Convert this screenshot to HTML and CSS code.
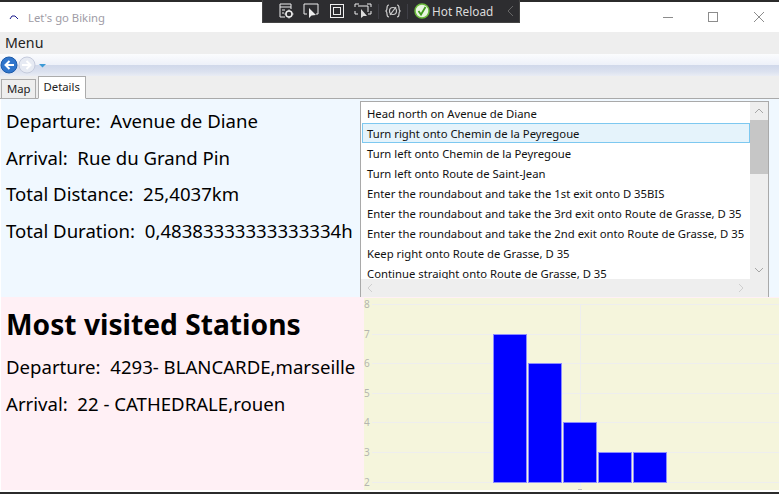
FILE: index.html
```html
<!DOCTYPE html>
<html lang="en">

<head>
    <meta charset="UTF-8">
    <title>Let's go Biking</title>
    <link rel="stylesheet" href="styles.css">
</head>

<body>
    <div class="window">
        <!--title bar-->
        <div class="titlebar">
            <svg class="app-icon" width="10" height="6" viewBox="0 0 10 6"><path d="M1 5 L3 2 H6 L9 5" fill="none" stroke="#1a1a8c" stroke-width="1"/></svg>
            <span class="app-title">Let's go Biking</span>
            <div class="win-btns">
                <svg width="12" height="12" viewBox="0 0 12 12"><path d="M1 6.5 H11" stroke="#8c8c8c"/></svg>
                <svg width="12" height="12" viewBox="0 0 12 12"><rect x="0.5" y="1.5" width="9" height="9" fill="none" stroke="#8c8c8c"/></svg>
                <svg width="12" height="12" viewBox="0 0 12 12"><path d="M0 1 L10 11 M10 1 L0 11" stroke="#8c8c8c"/></svg>
            </div>
        </div>

        <div class="menu">Menu</div>

        <!--back and forward-->
        <div class="navbar">
            <svg width="47" height="20" viewBox="0 0 47 20">
                <circle cx="9" cy="10" r="8" fill="#2f75cc" stroke="#1c5aa8"/>
                <path d="M14 10 H6 M9.500 6 L5.500 10 L9.500 14" fill="none" stroke="#fff" stroke-width="2"/>
                <circle cx="27" cy="10" r="8" fill="#e6eaf3" stroke="#c5cbdc"/>
                <path d="M22 10 H30 M26.500 6 L30.500 10 L26.500 14" fill="none" stroke="#fff" stroke-width="2"/>
                <path d="M39 9 H46 L42.500 12.500 Z" fill="#3c9ad6"/>
            </svg>
        </div>

        <div class="tabs">
            <div class="tab tab-map">Map</div>
            <div class="tab tab-active">Details</div>
        </div>

        <div class="content">
            <!--trip summary-->
            <div class="panel-trip">
                <p class="line">Departure:&nbsp; Avenue de Diane</p>
                <p class="line">Arrival:&nbsp; Rue du Grand Pin</p>
                <p class="line">Total Distance:&nbsp; 25,4037km</p>
                <p class="line">Total Duration:&nbsp; 0,48383333333333334h</p>
            </div>

            <!--instructions-->
            <div class="panel-steps">
                <div class="listbox">
                    <div class="list-main">
                        <ul class="steps">
                            <li>Head north on Avenue de Diane</li>
                            <li class="selected">Turn right onto Chemin de la Peyregoue</li>
                            <li>Turn left onto Chemin de la Peyregoue</li>
                            <li>Turn left onto Route de Saint-Jean</li>
                            <li>Enter the roundabout and take the 1st exit onto D 35BIS</li>
                            <li>Enter the roundabout and take the 3rd exit onto Route de Grasse, D 35</li>
                            <li>Enter the roundabout and take the 2nd exit onto Route de Grasse, D 35</li>
                            <li>Keep right onto Route de Grasse, D 35</li>
                            <li>Continue straight onto Route de Grasse, D 35</li>
                        </ul>
                        <div class="vscroll">
                            <svg width="18" height="18" viewBox="0 0 18 18"><path d="M5 11 L9 7 L13 11" fill="none" stroke="#a6a6a6"/></svg>
                            <div class="thumb"></div>
                            <svg class="arrow-down" width="18" height="18" viewBox="0 0 18 18"><path d="M5 7 L9 11 L13 7" fill="none" stroke="#a6a6a6"/></svg>
                        </div>
                    </div>
                    <div class="hscroll">
                        <svg width="18" height="18" viewBox="0 0 18 18"><path d="M11 5 L7 9 L11 13" fill="none" stroke="#cfcfcf"/></svg>
                        <svg width="18" height="18" viewBox="0 0 18 18"><path d="M7 5 L11 9 L7 13" fill="none" stroke="#cfcfcf"/></svg>
                    </div>
                </div>
            </div>

            <!--stations-->
            <div class="panel-stations">
                <h1 class="heading">Most visited Stations</h1>
                <p class="line">Departure:&nbsp; 4293- BLANCARDE,marseille</p>
                <p class="line">Arrival:&nbsp; 22 - CATHEDRALE,rouen</p>
            </div>

            <!--chart-->
            <div class="panel-chart">
                <svg class="chart" width="415" height="192" viewBox="0 0 415 192">
                    <g stroke="#eeeeee" stroke-width="1">
                        <path d="M8 6.500 H415"/>
                        <path d="M8 36.500 H415"/>
                        <path d="M8 65.500 H415"/>
                        <path d="M8 95.500 H415"/>
                        <path d="M8 124.500 H415"/>
                        <path d="M8 154.500 H415"/>
                        <path d="M8 184.500 H415"/>
                        <path d="M216.500 6 V190"/>
                    </g>
                    <path d="M214 191.500 H218" stroke="#bdbdbd"/>
                    <g class="axis">
                        <text x="0" y="10">8</text>
                        <text x="0" y="40">7</text>
                        <text x="0" y="69">6</text>
                        <text x="0" y="99">5</text>
                        <text x="0" y="128">4</text>
                        <text x="0" y="158">3</text>
                        <text x="0" y="188">2</text>
                    </g>
                    <g fill="#0000ff" stroke="#8c8cff" stroke-width="1">
                        <rect x="129.500" y="36.500" width="33" height="148"/>
                        <rect x="164.500" y="65.500" width="33" height="119"/>
                        <rect x="199.500" y="124.500" width="33" height="60"/>
                        <rect x="234.500" y="154.500" width="33" height="30"/>
                        <rect x="269.500" y="154.500" width="33" height="30"/>
                    </g>
                </svg>
            </div>
        </div>
    </div>

    <!--debug toolbar on top of the window-->
    <div class="devbar">
        <svg width="16" height="16" viewBox="0 0 16 16"><path d="M7 14 H2 V1 H13 V6 M2 4 H13 M4 7 H7 M4 10 H6" fill="none" stroke="#eee"/><circle cx="11" cy="11" r="3" fill="none" stroke="#eee" stroke-width="1.500"/><path d="M11 6.500 V8 M11 14 V15.500 M6.500 11 H8 M14 11 H15.500" stroke="#eee"/></svg>
        <svg width="16" height="16" viewBox="0 0 16 16"><path d="M4 11 H1 V1 H15 V11 H13" fill="none" stroke="#eee"/><path d="M6 5 L6 15 L8.500 12.500 L13 12 Z" fill="#eee"/></svg>
        <svg class="gap-r" width="16" height="16" viewBox="0 0 16 16"><rect x="1.500" y="1.500" width="13" height="13" fill="none" stroke="#eee"/><rect x="4.500" y="4.500" width="7" height="7" fill="none" stroke="#eee"/></svg>
        <svg width="18" height="16" viewBox="0 0 18 16"><path d="M1 4 V1 H5 M13 1 H17 V4 M1 8 V11 H4 M14 11 H17 V8 M4 3 H14 V9" fill="none" stroke="#eee"/><path d="M7 6 L7 15 L9.500 13 L13 13 Z" fill="#ddd"/></svg>
        <span class="dev-sep"></span>
        <svg width="16" height="16" viewBox="0 0 16 16"><path d="M4 2 Q2 2 2 5 Q2 7 1 8 Q2 9 2 11 Q2 14 4 14 M12 2 Q14 2 14 5 Q14 7 15 8 Q14 9 14 11 Q14 14 12 14" fill="none" stroke="#ccc" stroke-width="1.200"/><circle cx="8" cy="8" r="3.500" fill="none" stroke="#ccc" stroke-width="1.200"/><path d="M5 12 L11 4" stroke="#ccc" stroke-width="1.200"/></svg>
        <span class="dev-sep"></span>
        <svg width="16" height="16" viewBox="0 0 16 16"><circle cx="8" cy="8" r="7" fill="#e8f5e0" stroke="#6cbb3c" stroke-width="1.500"/><path d="M4.500 8 L7 11.500 L11.500 4" fill="none" stroke="#3f9a1c" stroke-width="1.800"/></svg>
        <span class="dev-label">Hot Reload</span>
        <svg class="dev-chevron" width="8" height="12" viewBox="0 0 8 12"><path d="M7 1 L2 6 L7 11" fill="none" stroke="#666"/></svg>
    </div>
</body>

</html>
```

FILE: styles.css
```css
* {
    margin: 0;
    padding: 0;
    box-sizing: border-box;
}

html,
body {
    width: 779px;
    height: 494px;
    overflow: hidden;
}

body {
    background-color: #2b2b2b;
    font-family: "Noto Sans", "Open Sans", sans-serif;
    color: #000;
    position: relative;
}

.window {
    margin-top: 2px;
    height: 490px;
    background-color: #fff;
    display: flex;
    flex-direction: column;
}

/*title bar*/
.titlebar {
    height: 30px;
    display: flex;
    align-items: center;
    padding-left: 9px;
    flex-shrink: 0;
}

.app-icon {
    margin-right: 9px;
}

.app-title {
    font-size: 11.3px;
    color: #a09ca6;
}

.win-btns {
    margin-left: auto;
    display: flex;
    gap: 34px;
    padding-right: 13px;
}

.menu {
    height: 22px;
    background-color: #eeeeee;
    font-size: 14.2px;
    line-height: 22px;
    padding-left: 5px;
    color: #222;
    flex-shrink: 0;
}

.navbar {
    height: 22px;
    display: flex;
    align-items: center;
    background: linear-gradient(to bottom, #fbfcfe 0, #eef1f9 48%, #d0d8ea 50%, #dbe1ef 80%, #e9ecf4 100%);
    flex-shrink: 0;
}

/*tabs*/
.tabs {
    height: 23px;
    background-color: #eeeeee;
    border-bottom: 1px solid #a9a9a9;
    display: flex;
    align-items: flex-end;
    padding-left: 1px;
    flex-shrink: 0;
}

.tab {
    height: 20px;
    margin-bottom: -1px;
    padding: 0 5px;
    font-size: 11.3px;
    line-height: 18px;
    color: #222;
    background-color: #eeeeee;
    border: 1px solid #acacac;
}

.tab-map {
    padding-right: 4px;
}

.tab-active {
    height: 23px;
    line-height: 20px;
    padding: 0 5px;
    margin-left: 2px;
    background-color: #fff;
    border-bottom-color: #fff;
}

/*content*/
.content {
    flex: 1;
    margin-left: 1px;
    display: grid;
    grid-template-columns: 359px 419px;
    grid-template-rows: 198px 193px;
}

.panel-trip {
    background-color: #f0f8ff;
    padding-top: 10px;
    padding-left: 5px;
}

.line {
    font-size: 18.6px;
    line-height: 24px;
    margin-bottom: 12.500px;
    white-space: nowrap;
}

.panel-steps {
    background-color: #f0f8ff;
    padding: 2px 10px 0 0;
}

.listbox {
    height: 196px;
    border: 1px solid #a9a9a9;
    background-color: #fff;
    display: flex;
    flex-direction: column;
}

.list-main {
    display: flex;
    height: 177px;
}

.steps {
    list-style: none;
    flex: 1;
    overflow: hidden;
    padding: 1px 0 0 1px;
    font-size: 11.3px;
}

.steps li {
    height: 20px;
    line-height: 21px;
    padding-left: 5px;
    white-space: nowrap;
    color: #111;
}

.steps .selected {
    background-color: #e5f3fb;
    border: 1px solid #7dc8f0;
    padding-left: 4px;
    line-height: 19px;
}

.vscroll {
    width: 18px;
    background-color: #eeeeee;
    display: flex;
    flex-direction: column;
}

.thumb {
    height: 54px;
    background-color: #c6c6c6;
}

.arrow-down {
    margin-top: auto;
}

.hscroll {
    height: 18px;
    background-color: #eeeeee;
    display: flex;
    justify-content: space-between;
    padding-right: 18px;
}

.panel-stations {
    background-color: #fff0f5;
    padding-left: 5px;
}

.heading {
    font-size: 28.2px;
    font-weight: 700;
    line-height: 36px;
    margin: 9px 0 13px;
    white-space: nowrap;
}

.panel-chart {
    background-color: #fff0f5;
    padding: 1px 0 0 4px;
}

.chart {
    display: block;
    background-color: #f5f5dc;
}

.axis text {
    font-size: 10px;
    fill: #b5b5b0;
}

/*visual studio toolbar*/
.devbar {
    position: absolute;
    left: 262px;
    top: 0;
    width: 258px;
    height: 23px;
    background-color: #2d2d30;
    border: 1px solid #444;
    border-top: 0;
    display: flex;
    align-items: center;
    gap: 9px;
    padding-left: 15px;
}

.devbar svg {
    flex-shrink: 0;
}

.gap-r {
    margin-left: 1px;
}

.dev-sep {
    width: 1px;
    height: 15px;
    margin: 0 -3px;
    background-color: #3f3f46;
}

.dev-label {
    font-size: 11.8px;
    color: #dcdcdc;
    margin-left: -7px;
    white-space: nowrap;
}

.dev-chevron {
    margin-left: 4px;
}
```
